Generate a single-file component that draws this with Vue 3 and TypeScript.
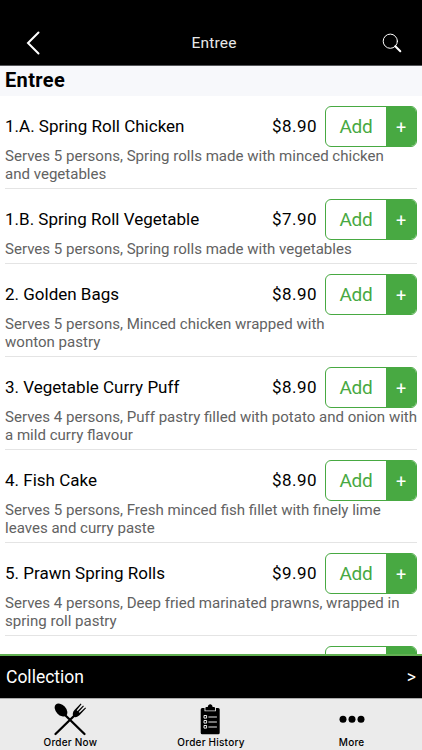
<script setup lang="ts">
interface MenuItem {
  name: string
  price: string
  lines: string[]
}

const items: MenuItem[] = [
  { name: '1.A. Spring Roll Chicken', price: '$8.90', lines: ['Serves 5 persons, Spring rolls made with minced chicken', 'and vegetables'] },
  { name: '1.B. Spring Roll Vegetable', price: '$7.90', lines: ['Serves 5 persons, Spring rolls made with vegetables'] },
  { name: '2. Golden Bags', price: '$8.90', lines: ['Serves 5 persons, Minced chicken wrapped with', 'wonton pastry'] },
  { name: '3. Vegetable Curry Puff', price: '$8.90', lines: ['Serves 4 persons, Puff pastry filled with potato and onion with', 'a mild curry flavour'] },
  { name: '4. Fish Cake', price: '$8.90', lines: ['Serves 5 persons, Fresh minced fish fillet with finely lime', 'leaves and curry paste'] },
  { name: '5. Prawn Spring Rolls', price: '$9.90', lines: ['Serves 4 persons, Deep fried marinated prawns, wrapped in', 'spring roll pastry'] },
]
</script>

<template>
  <div class="app">
    <header class="header">
      <svg class="back" viewBox="0 0 14 24"><path d="M12.5 1.5 2 12 12.5 22.5" /></svg>
      <h1>Entree</h1>
      <svg class="search" viewBox="0 0 20 20">
        <circle cx="8.3" cy="8.2" r="7.1" />
        <path d="m13.3 13.3 5 5" />
      </svg>
    </header>
    <main class="list">
      <h2>Entree</h2>
      <article v-for="item in items" :key="item.name" class="item">
        <div class="row">
          <span class="name">{{ item.name }}</span>
          <span class="price">{{ item.price }}</span>
          <button class="add"><span class="label">Add</span><span class="plus">+</span></button>
        </div>
        <p v-for="line in item.lines" :key="line">{{ line }}</p>
      </article>
      <article class="item">
        <div class="row">
          <span class="name"></span>
          <button class="add"><span class="label"></span><span class="plus"></span></button>
        </div>
      </article>
    </main>
    <section class="collection">
      <span>Collection</span>
      <span class="arrow">&gt;</span>
    </section>
    <nav class="tabs">
      <a class="tab">
        <svg class="icon" viewBox="0 0 34 34">
          <path class="stroke" d="M11 12 31.500 32M23 12 2.500 32" />
          <ellipse cx="8" cy="8" rx="5" ry="7.600" transform="rotate(-43 8 8)" />
          <path d="M20.300 14.500c-1-2.300-.5-4.500 1-6.200L27.700 1.500l.8.7-4.800 6 .9.8 5.500-5.600.8.8-5.200 5.800.9.8 5.700-5.300.7.8-6.300 6.700c-1.600 1.700-4.600 3.100-6.400 1.500z" />
        </svg>
        <span>Order Now</span>
      </a>
      <a class="tab">
        <svg class="icon" viewBox="0 0 34 34">
          <path d="M8.200 6H10.500V9.200H21.900V6H24.200Q25.700 6 25.700 7.500V30.800Q25.700 32.300 24.200 32.300H8.200Q6.700 32.300 6.700 30.800V7.500Q6.700 6 8.200 6z" />
          <path d="M11.400 8.400V6q0-1 1-1h1.400c.2-3.600 4.600-3.600 4.800 0H20q1 0 1 1v2.400z" />
          <path class="cut" d="M10 13.500h2.600v2.600H10zM10 18.500h2.600v2.600H10zM10 23.500h2.600v2.600H10zM14.400 15h8.500M14.400 20h8.500M14.400 25h8.500" />
        </svg>
        <span>Order History</span>
      </a>
      <a class="tab">
        <svg class="icon" viewBox="0 0 34 34">
          <circle cx="8" cy="17.200" r="3.500" /><circle cx="17" cy="17.200" r="3.500" /><circle cx="26" cy="17.200" r="3.500" />
        </svg>
        <span>More</span>
      </a>
    </nav>
  </div>
</template>

<style>
body {
  margin: 0;
  background: #fff;
}
</style>

<style scoped>
.app {
  display: flex;
  flex-direction: column;
  height: 750px;
  overflow: hidden;
  font-family: Roboto, "Liberation Sans", sans-serif;
  color: #000;
}
.header {
  box-sizing: border-box;
  flex: none;
  height: 66px;
  display: grid;
  grid-template-columns: 48px 1fr 48px;
  align-items: center;
  padding: 20px 0 0;
  border-bottom: 1px solid #55565a;
  background: #000;
  color: #fff;
}
.header svg {
  fill: none;
  stroke: #fff;
}
.back {
  width: 14px;
  height: 24px;
  margin-left: 26px;
  stroke-width: 2;
  stroke-linecap: round;
}
.search {
  width: 20px;
  height: 20px;
  margin-left: 8px;
  stroke-width: 1;
  stroke-linecap: round;
}
.search path {
  stroke-width: 2;
}
h1 {
  margin: 1px 0 0 6px;
  text-align: center;
  font-size: 15.5px;
  line-height: 20px;
  font-weight: 400;
  letter-spacing: .2px;
  color: #e8e8e8;
}
.list {
  flex: 1;
  min-height: 0;
  overflow: hidden;
  background: #fff;
}
h2 {
  height: 30px;
  margin: 0;
  padding: 0 5px;
  background: #f7f8fb;
  font-size: 20px;
  line-height: 29px;
  font-weight: 700;
  letter-spacing: .35px;
}
.item {
  margin: 0 5px;
  padding: 10px 0 5px;
  border-bottom: 1px solid #e4e4e4;
}
.row {
  display: flex;
  height: 41px;
}
.name {
  flex: 1;
  font-size: 17px;
  line-height: 41px;
}
.price {
  margin-right: 8px;
  font-size: 17px;
  line-height: 41px;
  letter-spacing: .45px;
}
.add {
  box-sizing: border-box;
  display: flex;
  width: 92px;
  height: 41px;
  padding: 0;
  overflow: hidden;
  border: 1px solid #48a942;
  border-radius: 6px;
  background: #fff;
  font-family: inherit;
}
.label {
  flex: 1;
  color: #48a942;
  font-size: 19px;
  line-height: 40px;
  letter-spacing: -.2px;
}
.plus {
  width: 30px;
  background: #48a942;
  color: #fff;
  font-size: 18px;
  line-height: 42px;
}
p {
  margin: 0;
  color: #626262;
  font-size: 15.06px;
  line-height: 18px;
  white-space: nowrap;
}
.collection {
  flex: none;
  box-sizing: border-box;
  height: 44px;
  display: flex;
  justify-content: space-between;
  padding: 0 6px;
  border-top: 2px solid #62b052;
  background: #000;
  color: #fff;
  font-size: 17.5px;
  line-height: 42px;
}
.tabs {
  flex: none;
  box-sizing: border-box;
  height: 52px;
  display: grid;
  grid-template-columns: repeat(3, 1fr);
  border-top: 1px solid #aaa;
  background: #ebebeb;
}
.tab {
  display: flex;
  flex-direction: column;
  align-items: center;
  font-family: Inter, sans-serif;
  font-size: 10px;
  line-height: 12px;
  font-weight: 500;
  letter-spacing: .22px;
}
.icon {
  width: 34px;
  height: 34px;
  margin: 3px 0 0;
}
.stroke {
  stroke: #000;
  stroke-width: 2.3;
  stroke-linecap: round;
}
.cut {
  fill: none;
  stroke: #ebebeb;
  stroke-width: 1;
}
</style>
